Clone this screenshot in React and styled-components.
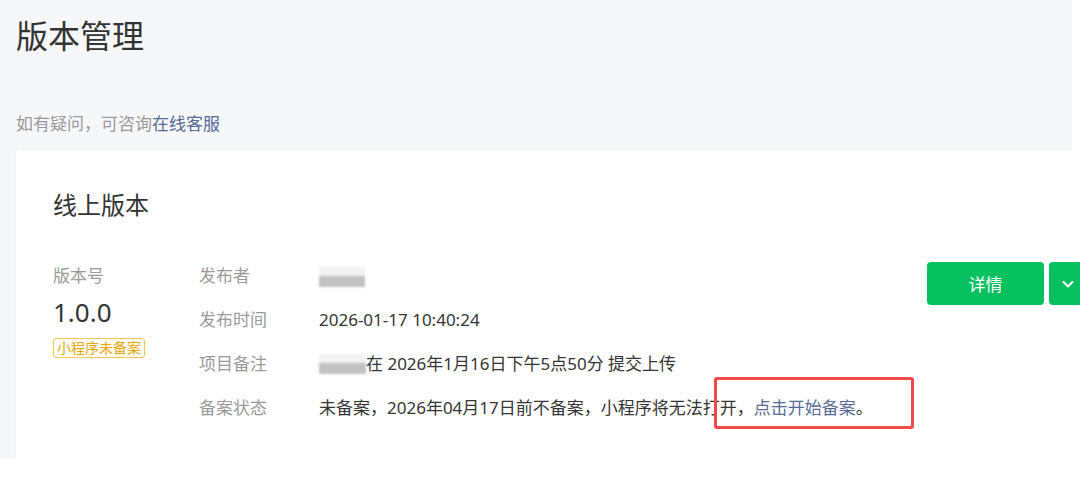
import React from 'react';
import styled, { createGlobalStyle } from 'styled-components';

const GlobalStyle = createGlobalStyle`
  html, body {
    margin: 0;
    padding: 0;
    background: #fff;
    overflow: hidden;
  }
  body {
    font-family: "Noto Sans", "Noto Sans CJK SC", sans-serif;
    color: #353535;
  }
`;

// Page canvas (the grey area of the console)
const Page = styled.div`
  width: 1080px;
  height: 459px;
  overflow: hidden;
  padding: 14px 0 0 16px;
  box-sizing: border-box;
  background: linear-gradient(to right, #f6f7f9 1072px, #fff 1072px);
`;

const PageTitle = styled.h1`
  margin: 0;
  font-size: 32px;
  font-weight: 400;
  line-height: 44px;
  color: #333;
`;

const Help = styled.p`
  margin: 54px 0 0;
  font-size: 17px;
  line-height: 24px;
  color: #9a9a9a;
`;

const Link = styled.a`
  color: #576b95;
  text-decoration: none;
  cursor: pointer;
`;

const Card = styled.section`
  margin-top: 14px;
  width: 1080px;
  height: 340px;
  background: #fff;
  border-radius: 4px;
  box-shadow: 0 0 3px rgba(0, 0, 0, 0.04);
  padding: 38px 0 0 37px;
  box-sizing: border-box;
`;

const CardTitle = styled.h2`
  margin: 0;
  font-size: 24px;
  font-weight: 400;
  line-height: 34px;
  color: #333;
`;

const Body = styled.div`
  display: flex;
  margin-top: 42px;
`;

const VersionCol = styled.div`
  width: 146px;
  display: flex;
  flex-direction: column;
  align-items: flex-start;
`;

const Label = styled.div`
  font-size: 17px;
  line-height: 24px;
  color: #9a9a9a;
`;

const Version = styled.div`
  margin-top: 8px;
  font-size: 26px;
  line-height: 32px;
  color: #353535;
`;

const Badge = styled.span`
  margin-top: 10px;
  padding: 0 3px;
  border: 1px solid #f3c55a;
  border-radius: 3px;
  font-size: 14px;
  line-height: 18px;
  color: #e9a712;
  background: #fffdf5;
`;

const InfoList = styled.div`
  flex: 1;
  display: flex;
  flex-direction: column;
  gap: 20px;
`;

const InfoRow = styled.div`
  display: flex;
  font-size: 17px;
  line-height: 24px;
`;

const InfoLabel = styled.div`
  width: 120px;
  flex-shrink: 0;
  color: #9a9a9a;
`;

const InfoValue = styled.div`
  display: flex;
  align-items: center;
  color: #353535;
  white-space: nowrap;
`;

// pixelated name hidden in the screenshot
const Blurred = styled.span`
  display: inline-block;
  width: ${p => p.w}px;
  height: 20px;
  margin-top: ${p => p.mt || 0}px;
  background: linear-gradient(to bottom, #f1f1f1 0 45%, #c2c2c2 45% 100%);
  filter: blur(0.8px);
`;

const Marked = styled.span`
  position: relative;
`;

const Highlight = styled.span`
  position: absolute;
  left: -40px;
  top: -19px;
  width: 200px;
  height: 52px;
  border: 3px solid #f04a4d;
  border-radius: 3px;
  box-sizing: border-box;
  pointer-events: none;
`;

const Actions = styled.div`
  display: flex;
  gap: 5px;
  margin-top: -2px;
  align-self: flex-start;
`;

const Button = styled.button`
  width: ${p => p.w}px;
  height: 43px;
  border: none;
  border-radius: 4px;
  background: #07c160;
  color: #fff;
  font-family: inherit;
  font-size: 17px;
  display: flex;
  align-items: center;
  justify-content: ${p => (p.icon ? 'flex-start' : 'center')};
  padding: ${p => (p.icon ? '0 0 0 12px' : '0')};
`;

export default function App() {
  return (
    <>
      <GlobalStyle />
      <Page>
        <PageTitle>版本管理</PageTitle>
        <Help>
          如有疑问，可咨询<Link>在线客服</Link>
        </Help>
        <Card>
          <CardTitle>线上版本</CardTitle>
          <Body>
            <VersionCol>
              <Label>版本号</Label>
              <Version>1.0.0</Version>
              <Badge>小程序未备案</Badge>
            </VersionCol>
            <InfoList>
              <InfoRow>
                <InfoLabel>发布者</InfoLabel>
                <InfoValue>
                  <Blurred w={46} mt={2} />
                </InfoValue>
              </InfoRow>
              <InfoRow>
                <InfoLabel>发布时间</InfoLabel>
                <InfoValue>2026-01-17 10:40:24</InfoValue>
              </InfoRow>
              <InfoRow>
                <InfoLabel>项目备注</InfoLabel>
                <InfoValue>
                  <Blurred w={47} />在 2026年1月16日下午5点50分 提交上传
                </InfoValue>
              </InfoRow>
              <InfoRow>
                <InfoLabel>备案状态</InfoLabel>
                <InfoValue>
                  <span>
                    未备案，2026年04月17日前不备案，小程序将无法打开，
                    <Marked>
                      <Link>点击开始备案</Link>
                      <Highlight />
                    </Marked>
                    。
                  </span>
                </InfoValue>
              </InfoRow>
            </InfoList>
            <Actions>
              <Button w={117}>详情</Button>
              <Button w={47} icon>
                <svg width="14" height="14" viewBox="0 0 14 14" fill="none">
                  <path d="M2.5 5 L7 9.5 L11.5 5" stroke="#fff" strokeWidth="2" strokeLinecap="round" strokeLinejoin="round" />
                </svg>
              </Button>
            </Actions>
          </Body>
        </Card>
      </Page>
    </>
  );
}
